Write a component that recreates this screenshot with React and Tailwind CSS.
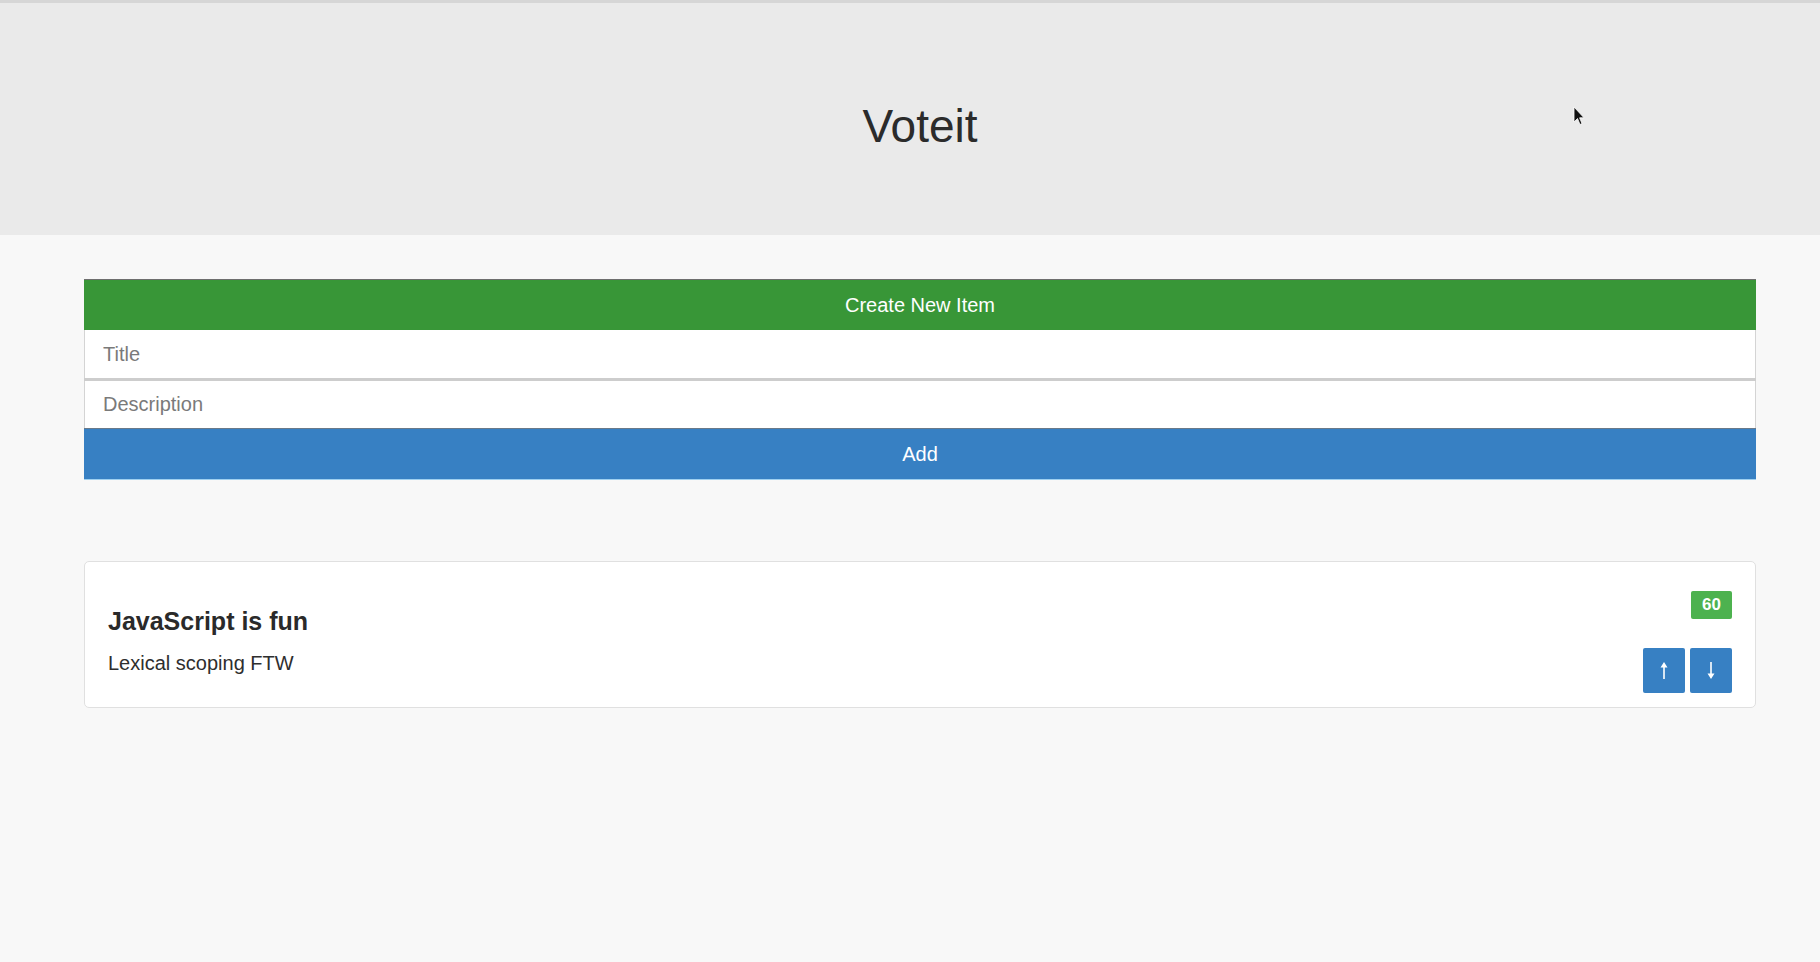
import React from "react";

function ArrowUp() {
  return (
    <svg width="8" height="17" viewBox="0 0 8 17" fill="white">
      <path d="M4 0 L7.5 5.5 L4.8 5.5 L4.8 17 L3.2 17 L3.2 5.5 L0.5 5.5 Z" />
    </svg>
  );
}

function ArrowDown() {
  return (
    <svg width="8" height="17" viewBox="0 0 8 17" fill="white">
      <path d="M4 17 L7.5 11.5 L4.8 11.5 L4.8 0 L3.2 0 L3.2 11.5 L0.5 11.5 Z" />
    </svg>
  );
}

export default function App() {
  return (
    <div
      className="relative min-h-screen bg-[#f8f8f8] text-[#333]"
      style={{ fontFamily: '"Liberation Sans", Arial, sans-serif' }}
    >
      <div className="h-[3px] bg-[#d6d6d6]" />
      <header className="h-[232px] bg-[#eaeaea] pl-[84px] pr-[64px] pt-[100px]">
        <h1 className="text-center text-[46px] leading-none text-[#2b2b2b]">Voteit</h1>
      </header>

      <main className="pl-[84px] pr-[64px] pt-[44px]">
        <div className="flex flex-col">
          <div className="h-[51px] border-t border-[#6e6e6e] bg-[#389637] flex items-center justify-center text-white text-[20px]">
            Create New Item
          </div>
          <input
            className="h-[48px] bg-white border-x border-[#d4d4d4] pl-[18px] text-[20px] outline-none placeholder:text-[#7a7a7a]"
            placeholder="Title"
          />
          <div className="h-[3px] bg-[#cdcdcd]" />
          <input
            className="h-[47px] bg-white border-x border-[#d4d4d4] pl-[18px] text-[20px] outline-none placeholder:text-[#7a7a7a]"
            placeholder="Description"
          />
          <button className="h-[52px] border-t border-[#6a7a8a] border-b border-b-[#9fd0f0] bg-[#3780c3] text-white text-[20px]">
            Add
          </button>
        </div>

        <div className="mt-[81px] h-[147px] rounded-[5px] border border-[#e0e0e0] bg-white flex justify-between px-[23px]">
          <div className="flex flex-col pt-[44px]">
            <div className="text-[25px] leading-[30px] font-bold text-[#2a2a2a]">JavaScript is fun</div>
            <div className="mt-[15px] text-[20px] leading-[24px] text-[#2e2e2e]">Lexical scoping FTW</div>
          </div>
          <div className="flex flex-col items-end pt-[29px]">
            <span className="h-[28px] w-[41px] bg-[#4db24f] rounded-[2px] flex items-center justify-center text-white font-bold text-[17px]">
              60
            </span>
            <div className="mt-[29px] flex gap-[5px]">
              <button className="h-[45px] w-[42px] rounded-[2px] bg-[#3780c3] flex items-center justify-center">
                <ArrowUp />
              </button>
              <button className="h-[45px] w-[42px] rounded-[2px] bg-[#3780c3] flex items-center justify-center">
                <ArrowDown />
              </button>
            </div>
          </div>
        </div>
      </main>

      <svg
        className="absolute left-[1573px] top-[106px]"
        width="12"
        height="20"
        viewBox="0 0 12 20"
      >
        <path d="M1 1 L1 16 L4.5 12.5 L7 18.5 L9 17.6 L6.6 11.8 L11 11.8 Z" fill="#111" stroke="white" strokeWidth="0.8" />
      </svg>
    </div>
  );
}
